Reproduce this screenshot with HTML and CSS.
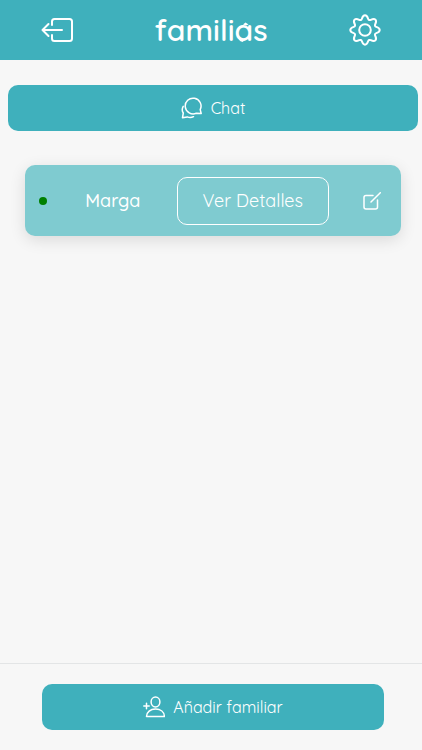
FILE: index.html
```html
<!DOCTYPE html>
<html lang="es">
<head>
<meta charset="utf-8">
<meta name="viewport" content="width=device-width, initial-scale=1">
<title>Familias</title>
<link rel="stylesheet" href="styles.css">
</head>
<body>
<header class="topbar">
  <button class="icon-button" type="button" aria-label="Salir">
    <svg class="icon-exit" viewBox="0 0 32 24"><path d="M11 7V3.500Q11 1 13.500 1H28.500Q31 1 31 3.500V20.500Q31 23 28.500 23H13.500Q11 23 11 20.500V17M21 12H1.500M7.500 6L1.500 12L7.500 18"/></svg>
  </button>
  <h1 class="brand">famili<span class="brand-a">a<svg class="brand-mark" viewBox="0 0 18 22"><path d="M8 3.500L10.500 1.500L13.500 3.500L11 4.500ZM3 16L6 17.500L10 19L7.500 21L5 20Z"/></svg></span>s</h1>
  <button class="icon-button" type="button" aria-label="Ajustes">
    <svg class="icon-gear" viewBox="0 0 32 32"><path d="M12.900 4.700C13.700 2.200 14.500 1.300 16 1.300S18.300 2.200 19.100 4.700C19.500 6 20.600 6.400 21.800 5.800C24.100 4.600 25.300 4.500 26.400 5.600S27.400 7.900 26.200 10.200C25.600 11.400 26 12.500 27.300 12.900C29.800 13.700 30.700 14.500 30.700 16S29.800 18.300 27.300 19.100C26 19.500 25.600 20.600 26.200 21.800C27.400 24.100 27.500 25.300 26.400 26.400S24.100 27.400 21.800 26.200C20.600 25.600 19.500 26 19.100 27.300C18.300 29.800 17.500 30.700 16 30.700S13.700 29.800 12.900 27.300C12.500 26 11.400 25.600 10.200 26.200C7.900 27.400 6.700 27.500 5.600 26.400S4.600 24.100 5.800 21.800C6.400 20.600 6 19.500 4.700 19.100C2.200 18.300 1.300 17.500 1.300 16S2.200 13.700 4.700 12.900C6 12.500 6.400 11.400 5.800 10.200C4.600 7.900 4.500 6.700 5.600 5.600S7.900 4.600 10.200 5.800C11.400 6.400 12.500 6 12.900 4.700Z"/><circle cx="16" cy="16" r="5.800"/></svg>
  </button>
</header>
<main class="content">
  <button class="action" type="button">
    <svg class="icon-action" viewBox="0 0 22 22"><path d="M20.200 16.500L15.300 16.300A7.900 7.900 0 1 1 19.200 12.600ZM2.200 9.300C.9 11.600 1 14 2.300 16L1.500 20.700L6.300 19.900C8.300 20.900 10.500 20.800 12.500 19.700"/></svg>
    <span>Chat</span>
  </button>
  <ul class="family">
    <li class="member">
      <span class="status" role="img" aria-label="Conectado"></span>
      <span class="name">Marga</span>
      <button class="details" type="button">Ver Detalles</button>
      <button class="icon-button edit" type="button" aria-label="Editar">
        <svg class="icon-edit" viewBox="0 0 18 18"><path d="M10 3.500H3Q1 3.500 1 5.500V15Q1 17 3 17H12.500Q14.500 17 14.500 15V8M8 10L17.300 .7"/></svg>
      </button>
    </li>
  </ul>
</main>
<footer class="bottom">
  <button class="action" type="button">
    <svg class="icon-action" viewBox="0 0 22 22"><ellipse cx="12.500" cy="6" rx="4.400" ry="4.900"/><path d="M3.500 20.600C3.500 15.800 7.500 13.100 12.500 13.100S21.300 15.800 21.300 20.600ZM.8 10H6.200M3.500 7.300V12.700"/></svg>
    <span>Añadir familiar</span>
  </button>
</footer>
</body>
</html>
```
FILE: styles.css
```css
* { box-sizing: border-box; }

body {
  display: flex;
  flex-direction: column;
  min-height: 100vh;
  margin: 0;
  background: #f7f7f7;
  color: #fff;
  font-family: Quicksand, Lato, sans-serif;
  font-weight: 300;
}

button {
  border: 0;
  padding: 0;
  background: none;
  color: inherit;
  font: inherit;
  cursor: pointer;
}

svg {
  display: block;
  fill: none;
  stroke: #fff;
  stroke-linecap: round;
  stroke-linejoin: round;
}

.topbar {
  display: grid;
  grid-template-columns: 1fr auto 1fr;
  align-items: center;
  height: 60px;
  padding: 0 41px;
  background: #3fb0bc;
}

.icon-button {
  display: grid;
  place-items: center;
}

.icon-exit { width: 32px; height: 24px; stroke-width: 2; }
.icon-gear { width: 32px; height: 32px; stroke-width: 2; }
.icon-edit { width: 18px; height: 18px; stroke-width: 1.5; }
.icon-action { width: 22px; height: 22px; stroke-width: 1.5; }

.topbar .icon-button:first-child { justify-self: start; }
.topbar .icon-button:last-child { justify-self: end; }

.brand {
  margin: 0;
  font-size: 30px;
  line-height: 40px;
  font-weight: 600;
}

.brand-a { position: relative; }

.brand-mark {
  position: absolute;
  left: 0;
  bottom: 6px;
  width: 18px;
  height: 22px;
  fill: #fff;
  stroke: none;
}

.content {
  flex: 1;
  padding: 25px 4px 0 8px;
}

.action {
  display: flex;
  justify-content: center;
  align-items: center;
  gap: 8px;
  width: 100%;
  height: 46px;
  border-radius: 10px;
  background: #3fb0bc;
  font-size: 16px;
  line-height: 24px;
  font-weight: 400;
}

.family {
  margin: 34px 17px 0;
  padding: 0;
  list-style: none;
}

.member {
  display: grid;
  grid-template-columns: 36px 8fr 152px 5fr;
  align-items: center;
  min-height: 71px;
  border-radius: 10px;
  background: #7fcbd0;
  box-shadow: 0 4px 16px rgba(0, 0, 0, .12);
}

.status {
  width: 8px;
  height: 8px;
  border-radius: 50%;
  justify-self: center;
  background: #008000;
}

.name {
  padding-right: 12px;
  text-align: center;
  font-size: 18px;
  font-weight: 500;
}

.details {
  height: 48px;
  border: 1px solid #fff;
  border-radius: 10px;
  font-size: 18px;
  font-weight: 400;
}

.edit {
  justify-self: end;
  margin-right: 20px;
}

.bottom {
  padding: 20px 38px 20px 42px;
  border-top: 1px solid #e3e5e6;
}
```
